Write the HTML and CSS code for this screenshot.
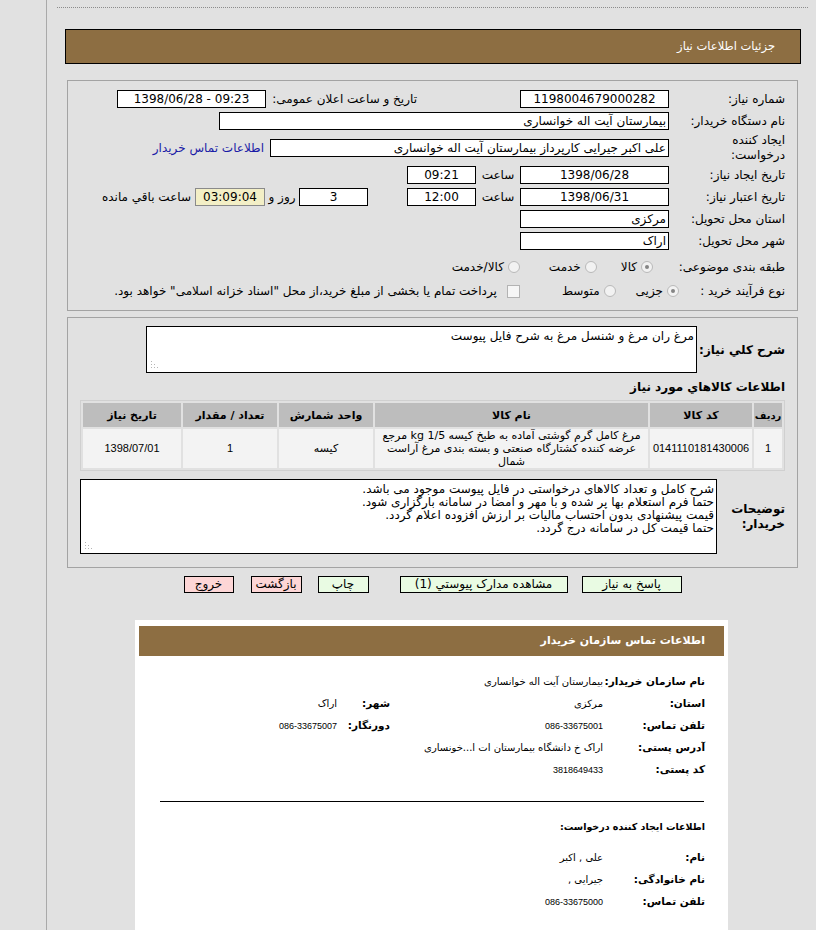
FILE: index.html
```html
<!DOCTYPE html>
<html lang="fa" dir="rtl">
<head>
<meta charset="utf-8">
<title>جزئیات اطلاعات نیاز</title>
<link rel="stylesheet" href="styles.css">
</head>
<body>
<div class="main">
  <div class="dots"></div>
  <div class="titlebar">جزئیات اطلاعات نیاز</div>

  <div class="panel p1">
    <div class="row">
      <div class="lbl">شماره نیاز:</div>
      <div class="box w149 c">1198004679000282</div>
      <div class="lbl2">تاریخ و ساعت اعلان عمومی:</div>
      <div class="box w149 c ltr" dir="ltr">1398/06/28 - 09:23</div>
    </div>
    <div class="row">
      <div class="lbl">نام دستگاه خریدار:</div>
      <div class="box w450">بیمارستان آیت اله خوانساری</div>
    </div>
    <div class="row tall">
      <div class="lbl">ایجاد کننده<br>درخواست:</div>
      <div class="box w399">علی اکبر جیرایی کارپرداز بیمارستان آیت اله خوانساری</div>
      <a class="link" href="#">اطلاعات تماس خریدار</a>
    </div>
    <div class="row">
      <div class="lbl">تاریخ ایجاد نیاز:</div>
      <div class="box w149 c">1398/06/28</div>
      <div class="saat">ساعت</div>
      <div class="box w69 c">09:21</div>
    </div>
    <div class="row">
      <div class="lbl">تاریخ اعتبار نیاز:</div>
      <div class="box w149 c">1398/06/31</div>
      <div class="saat">ساعت</div>
      <div class="box w69 c">12:00</div>
      <div class="box w69 c days">3</div>
      <div class="ruz">روز و</div>
      <div class="box remain c">03:09:04</div>
      <div class="rest">ساعت باقي مانده</div>
    </div>
    <div class="row">
      <div class="lbl">استان محل تحویل:</div>
      <div class="box w149">مرکزی</div>
    </div>
    <div class="row">
      <div class="lbl">شهر محل تحویل:</div>
      <div class="box w149">اراک</div>
    </div>
    <div class="row radios r8">
      <div class="lbl">طبقه بندی موضوعی:</div>
      <span class="opt first"><span class="radio on"></span>کالا</span>
      <span class="opt second"><span class="radio"></span>خدمت</span>
      <span class="opt third"><span class="radio"></span>کالا/خدمت</span>
    </div>
    <div class="row radios r9">
      <div class="lbl">نوع فرآیند خرید :</div>
      <span class="opt first"><span class="radio on"></span>جزیی</span>
      <span class="opt"><span class="radio"></span>متوسط</span>
      <span class="opt chk"><span class="check"></span>پرداخت تمام یا بخشی از مبلغ خرید،از محل "اسناد خزانه اسلامی" خواهد بود.</span>
    </div>
  </div>

  <div class="panel p2">
    <div class="descrow">
      <div class="blbl">شرح کلي نياز:</div>
      <div class="area a1">مرغ ران مرغ و شنسل مرغ به شرح فایل پیوست<span class="grip"><svg width="8" height="8" viewBox="0 0 8 8"><g fill="#b4b4b4"><rect x="0" y="0" width="1" height="1"/><rect x="0" y="3" width="1" height="1"/><rect x="0" y="6" width="1" height="1"/><rect x="3" y="3" width="1" height="1"/><rect x="3" y="6" width="1" height="1"/><rect x="6" y="6" width="1" height="1"/></g></svg></span></div>
    </div>
    <div class="heading">اطلاعات کالاهاي مورد نياز</div>
    <table class="items">
      <thead>
        <tr>
          <th class="c1">ردیف</th>
          <th class="c2">کد کالا</th>
          <th class="c3">نام کالا</th>
          <th class="c4">واحد شمارش</th>
          <th class="c5">تعداد / مقدار</th>
          <th class="c6">تاریخ نیاز</th>
        </tr>
      </thead>
      <tbody>
        <tr>
          <td class="dig">1</td>
          <td class="dig">0141110181430006</td>
          <td class="name">مرغ کامل گرم گوشتی آماده به طبخ کیسه 1/5 kg مرجع<br>عرضه کننده کشتارگاه صنعتی و بسته بندی مرغ آراست<br>شمال</td>
          <td>کیسه</td>
          <td class="dig">1</td>
          <td class="dig">1398/07/01</td>
        </tr>
      </tbody>
    </table>
    <div class="notesrow">
      <div class="blbl nl">توضیحات<br>خریدار:</div>
      <div class="area a2">شرح کامل و تعداد کالاهای درخواستی در فایل پیوست موجود می باشد.<br>حتما فرم استعلام بها پر شده و با مهر و امضا در سامانه بارگزاری شود.<br>قیمت پیشنهادی بدون احتساب مالیات بر ارزش افزوده اعلام گردد.<br>حتما قیمت کل در سامانه درج گردد.<span class="grip"><svg width="8" height="8" viewBox="0 0 8 8"><g fill="#b4b4b4"><rect x="0" y="0" width="1" height="1"/><rect x="0" y="3" width="1" height="1"/><rect x="0" y="6" width="1" height="1"/><rect x="3" y="3" width="1" height="1"/><rect x="3" y="6" width="1" height="1"/><rect x="6" y="6" width="1" height="1"/></g></svg></span></div>
    </div>
  </div>

  <div class="buttons">
    <span class="btn green b1">پاسخ به نیاز</span>
    <span class="btn green b2">مشاهده مدارک پیوستي (1)</span>
    <span class="btn green b3">چاپ</span>
    <span class="btn pink b4">بازگشت</span>
    <span class="btn pink b5">خروج</span>
  </div>

  <div class="card">
    <div class="cardhead">اطلاعات تماس سازمان خریدار</div>
    <div class="cbody">
      <div class="crow"><span class="cl">نام سازمان خریدار:</span><span class="cv">بیمارستان آیت اله خوانساری</span></div>
      <div class="crow"><span class="cl">استان:</span><span class="cv">مرکزی</span><span class="cl2">شهر:</span><span class="cv2">اراک</span></div>
      <div class="crow"><span class="cl">تلفن تماس:</span><span class="cv num">086-33675001</span><span class="cl2">دورنگار:</span><span class="cv2 num">086-33675007</span></div>
      <div class="crow"><span class="cl">آدرس پستی:</span><span class="cv">اراک خ دانشگاه بیمارستان ات ا...خونساری</span></div>
      <div class="crow"><span class="cl">کد پستی:</span><span class="cv num">3818649433</span></div>
      <div class="hr"></div>
      <div class="chead">اطلاعات ایجاد کننده درخواست:</div>
      <div class="crow"><span class="cl">نام:</span><span class="cv">علی , اکبر</span></div>
      <div class="crow"><span class="cl">نام خانوادگی:</span><span class="cv">جیرایی ,</span></div>
      <div class="crow"><span class="cl">تلفن تماس:</span><span class="cv num">086-33675000</span></div>
    </div>
  </div>
</div>
</body>
</html>
```
FILE: styles.css
```css
* { box-sizing: border-box; }
html, body { margin: 0; padding: 0; }
body {
  background: #e1e1e1;
  font-family: "DejaVu Sans", sans-serif;
  font-size: 12px;
  color: #000;
  overflow: hidden;
}
.main {
  margin-left: 46px;
  border-left: 1px solid #a9a9a9;
  min-height: 930px;
  padding-top: 7px;
}
.dots {
  border-top: 1px dotted #8c8c8c;
  margin: 0 8px 0 10px;
}
.titlebar {
  margin: 21px 15px 0 18px;
  height: 35px;
  border: 1px solid #000;
  background: #8d6e42;
  color: #fff;
  padding-right: 25px;
  line-height: 33px;
  font-size: 11.5px;
}
.panel {
  margin: 16px 18px 0 20px;
  border: 1px solid #a3a3a3;
  padding: 9px 12px 0 12px;
}
.p1 { height: 231px; }
.p2 { height: 251px; margin-top: 6px; padding-top: 8px; }

.row {
  display: flex;
  align-items: center;
  height: 18px;
  margin-bottom: 4px;
  white-space: nowrap;
}
.row.tall { height: 28px; }
.lbl { width: 116px; flex: none; line-height: 15px; }
.box {
  flex: none;
  height: 18px;
  border: 1px solid #000;
  background: #fff;
  line-height: 16px;
  padding: 0 2px;
  overflow: hidden;
}
.box.c { text-align: center; }
.w149 { width: 149px; }
.w450 { width: 450px; }
.w399 { width: 399px; }
.w69 { width: 69px; }
.lbl2 { width: 151px; margin-right: 103px; flex: none; }
.link { color: #1a1aa6; text-decoration: none; margin-right: 6px; }
.saat { width: 44px; text-align: center; flex: none; }
.days { margin-right: 39px; }
.ruz { width: 34px; text-align: center; flex: none; }
.remain { width: 70px; background: #f3efc6; border-color: #8a8a8a; }
.rest { margin-right: 4px; }

.radios { height: 18px; }
.r8 { margin-top: 8px; margin-bottom: 6px; }
.opt { display: inline-flex; align-items: center; flex: none; }
.opt + .opt { margin-right: 20px; }
.r8 .first { margin-right: 16px; }
.r8 .second { margin-right: 24px; }
.r8 .third { margin-right: 29px; }
.r9 .first { margin-right: -10px; }
.r9 .chk { margin-right: 42px; }
.radio {
  width: 12px; height: 12px;
  border-radius: 50%;
  border: 1px solid #b9b9b9;
  background: #f2f2f2;
  margin-left: 4px;
  position: relative;
  display: inline-block;
}
.radio.on::after {
  content: "";
  position: absolute;
  left: 3px; top: 3px;
  width: 4px; height: 4px;
  border-radius: 50%;
  background: #858585;
}
.check {
  width: 13px; height: 13px;
  border: 1px solid #b3b3b3;
  background: #f6f6f6;
  margin-left: 10px;
  display: inline-block;
}

.descrow { display: flex; align-items: center; height: 47px; }
.blbl { font-weight: bold; font-size: 12px; flex: none; }
.descrow .blbl { width: 88px; }
.area {
  background: #fff;
  border: 1px solid #000;
  position: relative;
  flex: none;
  line-height: 13px;
  padding: 2px 2px;
}
.a1 { width: 551px; height: 47px; padding-top: 3px; }
.grip {
  position: absolute;
  left: 4px; bottom: 3px;
  width: 8px; height: 8px;
  line-height: 0;
}
.heading { font-weight: bold; font-size: 12px; margin-top: 6px; height: 16px; line-height: 16px; }
.items {
  margin-top: 5px;
  border-collapse: separate;
  border-spacing: 2px;
  border: 1px solid #d0d0d0;
  width: 705px;
  table-layout: fixed;
  font-size: 11px;
}
.items th {
  background: #bdbdbd;
  font-weight: bold;
  height: 24px;
  padding: 0;
  font-size: 11px;
  overflow: visible;
  white-space: nowrap;
}
.items td {
  background: #f3f3f3;
  height: 39px;
  text-align: center;
  padding: 0;
  line-height: 13px;
}
.items td.dig { font-family: "Liberation Sans", "DejaVu Sans", sans-serif; font-size: 11px; }
.items td.name { white-space: nowrap; overflow: hidden; }
.c1 { width: 28px; }
.items th.c1 { font-size: 10px; }
.c2 { width: 102px; }
.c3 { width: 273px; }
.c4 { width: 94px; }
.c5 { width: 94px; }
.c6 { width: 98px; }

.notesrow { display: flex; align-items: center; margin-top: 8px; height: 75px; }
.nl { width: 68px; line-height: 15px; }
.a2 { width: 637px; height: 75px; padding-top: 3px; white-space: nowrap; }

.buttons {
  display: flex;
  justify-content: center;
  margin: 8px 18px 0 20px;
  height: 17px;
}
.btn {
  height: 17px;
  border: 1px solid #000;
  font-size: 12px;
  line-height: 15px;
  text-align: center;
  flex: none;
}
.green { background: #e9fbe3; }
.pink { background: #fdd6d6; }
.b1 { width: 100px; }
.b2 { width: 168px; margin-right: 14px; }
.b3 { width: 51px; margin-right: 31px; }
.b4 { width: 51px; margin-right: 16px; }
.b5 { width: 50px; margin-right: 17px; }

.card {
  margin: 27px auto 0 88px;
  width: 593px;
  height: 320px;
  background: #fff;
  padding: 6px 4px 0 4px;
}
.cardhead {
  height: 30px;
  background: #8d6e42;
  color: #fff;
  font-weight: bold;
  font-size: 11px;
  line-height: 30px;
  padding-right: 19px;
}
.cbody { padding: 14px 19px 0 0; }
.crow { display: flex; height: 22px; line-height: 22px; align-items: baseline; white-space: nowrap; }
.cl { width: 102px; font-weight: bold; font-size: 10.5px; flex: none; }
.cv { width: 213px; font-size: 10px; flex: none; }
.cl2 { width: 53px; font-weight: bold; font-size: 10.5px; flex: none; }
.cv2 { font-size: 10px; }
.num { font-family: "Liberation Sans", "DejaVu Sans", sans-serif; font-size: 9px; }
.hr { border-top: 1px solid #000; margin: 21px 1px 0 auto; width: 544px; }
.chead { font-weight: bold; font-size: 9.5px; height: 22px; line-height: 22px; margin-top: 14px; margin-bottom: 8px; }
```
